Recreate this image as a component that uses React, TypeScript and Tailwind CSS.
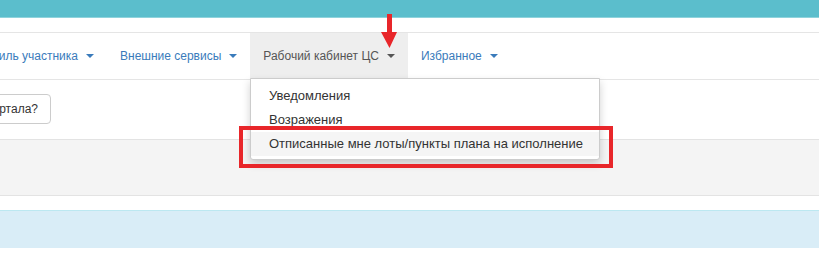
import React from "react";

function Caret() {
  return (
    <span className="inline-block ml-[8px] w-0 h-0 border-t-[4px] border-t-current border-x-[4px] border-x-transparent align-middle"></span>
  );
}

function NavItem({ label, active }: { label: string; active?: boolean }) {
  return (
    <div
      className={
        "flex items-center h-full px-[13px] whitespace-nowrap shrink-0 " +
        (active ? "bg-[#eeeeee] text-[#555555]" : "text-[#3a7bbb]")
      }
    >
      <span>{label}</span>
      <Caret />
    </div>
  );
}

export default function App() {
  return (
    <div className="relative w-[823px] h-[258px] overflow-hidden bg-white font-['Liberation_Sans',Arial,sans-serif] text-[12px] leading-[18px]">
      <div className="w-[819px]">
        {/* top bar */}
        <div className="h-[18px] bg-[#5bbecc] border-b border-[#8fd3dc]"></div>
        <div className="h-[14px]"></div>

        {/* nav */}
        <div className="relative h-[48px] border-y border-[#e5e5e5] flex">
          <div className="w-[107px] h-full flex justify-end">
            <NavItem label="Профиль участника" />
          </div>
          <NavItem label="Внешние сервисы" />
          <NavItem label="Рабочий кабинет ЦС" active />
          <NavItem label="Избранное" />

          {/* dropdown */}
          <div className="absolute left-[250px] top-[45px] w-[350px] bg-white border border-[#cccccc] rounded-b-[3px] shadow-[0_4px_8px_rgba(0,0,0,0.18)] pt-[5px] pb-[3px] text-[13px] text-[#333333] z-10">
            <div className="h-[24px] flex items-center pl-[18px]">Уведомления</div>
            <div className="h-[24px] flex items-center pl-[18px]">Возражения</div>
            <div className="h-[24px] flex items-center pl-[18px] bg-[#f5f5f5] whitespace-nowrap">
              Отписанные мне лоты/пункты плана на исполнение
            </div>
          </div>
        </div>

        {/* button row */}
        <div className="h-[59px] pt-[14px]">
          <div className="w-[51px] flex justify-end">
            <div className="shrink-0 flex items-center h-[30px] px-[12px] border border-[#cccccc] rounded-[4px] text-[12px] text-[#333333] whitespace-nowrap">
              Вопросы по работе портала?
            </div>
          </div>
        </div>

        {/* gray well */}
        <div className="h-[57px] bg-[#f4f4f4] border-y border-[#e3e3e3]"></div>
        <div className="h-[14px]"></div>

        {/* info alert */}
        <div className="h-[38px] bg-[#d9edf7] border-t border-[#bce8f1]"></div>
      </div>

      {/* red annotation arrow */}
      <svg className="absolute left-[380px] top-[14px] z-20" width="18" height="36" viewBox="0 0 18 36">
        <rect x="7" y="0" width="5" height="20" fill="#e8262a" />
        <polygon points="1,18 17,18 9.5,34" fill="#e8262a" />
      </svg>

      {/* red annotation box */}
      <div className="absolute left-[239px] top-[126px] w-[374px] h-[42px] border-[4px] border-[#e8262a] z-20"></div>
    </div>
  );
}
